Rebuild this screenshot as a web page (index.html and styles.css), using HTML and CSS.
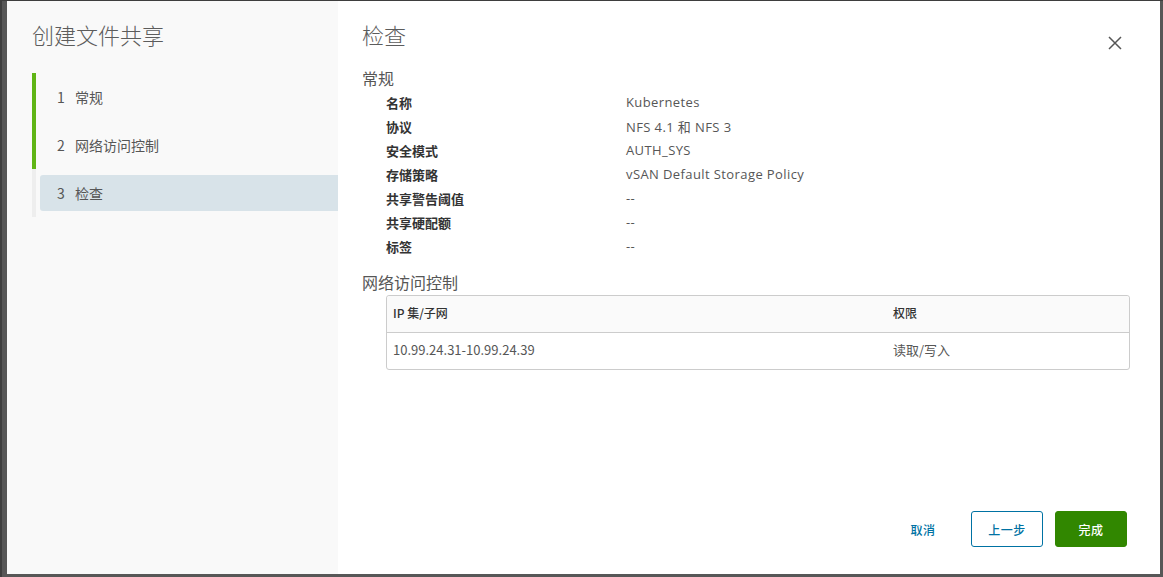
FILE: index.html
```html
<!DOCTYPE html>
<html lang="zh-CN">
<head>
<meta charset="utf-8">
<title>创建文件共享</title>
<link rel="stylesheet" href="styles.css">
</head>
<body>
<div class="modal">
  <aside class="sidebar">
    <h2 class="wizard-title">创建文件共享</h2>
    <ol class="steps">
      <li class="step done"><span class="step-link"><span class="num">1</span><span class="label">常规</span></span></li>
      <li class="step done"><span class="step-link"><span class="num">2</span><span class="label">网络访问控制</span></span></li>
      <li class="step current"><span class="step-link"><span class="num">3</span><span class="label">检查</span></span></li>
    </ol>
  </aside>
  <main class="content">
    <header class="content-header">
      <h3 class="page-title">检查</h3>
      <button class="close" aria-label="关闭">
        <svg width="14" height="14" viewBox="0 0 14 14"><path d="M1 1 L13 13 M13 1 L1 13" stroke="#565656" stroke-width="1.5" fill="none"/></svg>
      </button>
    </header>
    <section class="section">
      <h4 class="section-title">常规</h4>
      <dl class="props">
        <div class="prop"><dt>名称</dt><dd class="latin">Kubernetes</dd></div>
        <div class="prop"><dt>协议</dt><dd class="latin">NFS 4.1 和 NFS 3</dd></div>
        <div class="prop"><dt>安全模式</dt><dd class="latin">AUTH_SYS</dd></div>
        <div class="prop"><dt>存储策略</dt><dd class="latin">vSAN Default Storage Policy</dd></div>
        <div class="prop"><dt>共享警告阈值</dt><dd class="latin">--</dd></div>
        <div class="prop"><dt>共享硬配额</dt><dd class="latin">--</dd></div>
        <div class="prop"><dt>标签</dt><dd class="latin">--</dd></div>
      </dl>
    </section>
    <section class="section net">
      <h4 class="section-title">网络访问控制</h4>
      <div class="grid">
        <div class="grid-row grid-head"><div class="col1">IP 集/子网</div><div class="col2">权限</div></div>
        <div class="grid-row"><div class="col1">10.99.24.31-10.99.24.39</div><div class="col2">读取/写入</div></div>
      </div>
    </section>
    <footer class="footer">
      <button class="btn btn-link">取消</button>
      <button class="btn btn-outline">上一步</button>
      <button class="btn btn-success">完成</button>
    </footer>
  </main>
</div>
</body>
</html>
```
FILE: styles.css
```css
* { box-sizing: border-box; }
html, body { margin: 0; padding: 0; }
body {
  width: 1163px;
  height: 577px;
  background: #575757;
  border-top: 1px solid #3e3e3e;
  border-left: 2px solid #3e3e3e;
  padding-left: 5px;
  font-family: "Noto Sans CJK SC", "Noto Sans", sans-serif;
  color: #565656;
  overflow: hidden;
}
.modal {
  width: 1153px;
  height: 573px;
  display: flex;
  background: #fff;
}
.sidebar {
  width: 331px;
  background: #f9f9f9;
  padding: 19px 0 0 25px;
}
.wizard-title {
  margin: 0;
  font-size: 22px;
  line-height: 28px;
  font-weight: 300;
  color: #5c5c5c;
}
.steps {
  list-style: none;
  margin: 25px 0 0 0;
  padding: 0;
}
.step {
  height: 48px;
  border-left: 4px solid #eeeeee;
  padding: 6px 0;
}
.step.done { border-left-color: #60b515; }
.step-link {
  display: flex;
  align-items: center;
  height: 36px;
  margin-left: 4px;
  padding-left: 17px;
  font-size: 14px;
  color: #565656;
  border-radius: 3px 0 0 3px;
}
.step.current .step-link { background: #d8e3e9; }
.num { width: 18px; }
.content {
  flex: 1;
  display: flex;
  flex-direction: column;
  padding: 19px 30px 27px 24px;
}
.content-header {
  display: flex;
  justify-content: space-between;
  align-items: flex-start;
  height: 28px;
}
.page-title {
  margin: 0;
  font-size: 22px;
  line-height: 28px;
  font-weight: 300;
  color: #5c5c5c;
}
.close {
  border: 0;
  background: none;
  padding: 0;
  margin: 16px 8px 0 0;
  width: 14px;
  height: 14px;
  display: block;
}
.close svg { display: block; }
.section-title {
  margin: 0;
  font-size: 16px;
  line-height: 24px;
  font-weight: 400;
  color: #565656;
}
.section { margin-top: 18px; }
.section.net { margin-top: 12px; }
.props { margin: 0; padding: 0 0 0 24px; }
.prop { display: flex; height: 24px; align-items: center; }
.prop dt {
  width: 240px;
  font-size: 13px;
  font-weight: 700;
  color: #333;
}
.prop dd {
  margin: 0;
  font-size: 13px;
  color: #565656;
}
.latin {
  font-family: "Open Sans", "Noto Sans CJK SC", sans-serif;
  letter-spacing: 0.4px;
}
.grid {
  margin: 1px 0 0 24px;
  border: 1px solid #ccc;
  border-radius: 3px;
}
.grid-row {
  display: flex;
  height: 36px;
  align-items: center;
  padding-bottom: 3px;
  font-size: 13px;
  color: #565656;
}
.grid-head {
  height: 37px;
  background: #fafafa;
  border-bottom: 1px solid #ccc;
  border-radius: 3px 3px 0 0;
  font-size: 12px;
  font-weight: 500;
  color: #333;
}
.col1 { width: 506px; padding-left: 6px; }
.col2 { flex: 1; }
.footer {
  margin-top: auto;
  display: flex;
  justify-content: flex-end;
  gap: 12px;
  padding-right: 3px;
}
.btn {
  width: 72px;
  height: 36px;
  border-radius: 3px;
  font-family: "Noto Sans CJK SC", sans-serif;
  font-size: 12px;
  font-weight: 500;
  letter-spacing: 0.5px;
  border: 1px solid transparent;
  background: none;
  padding: 0;
}
.btn-link { color: #0072a3; }
.btn-outline { color: #0072a3; border-color: #0072a3; background: #fff; }
.btn-success { color: #fff; background: #318700; border-color: #318700; }
```
